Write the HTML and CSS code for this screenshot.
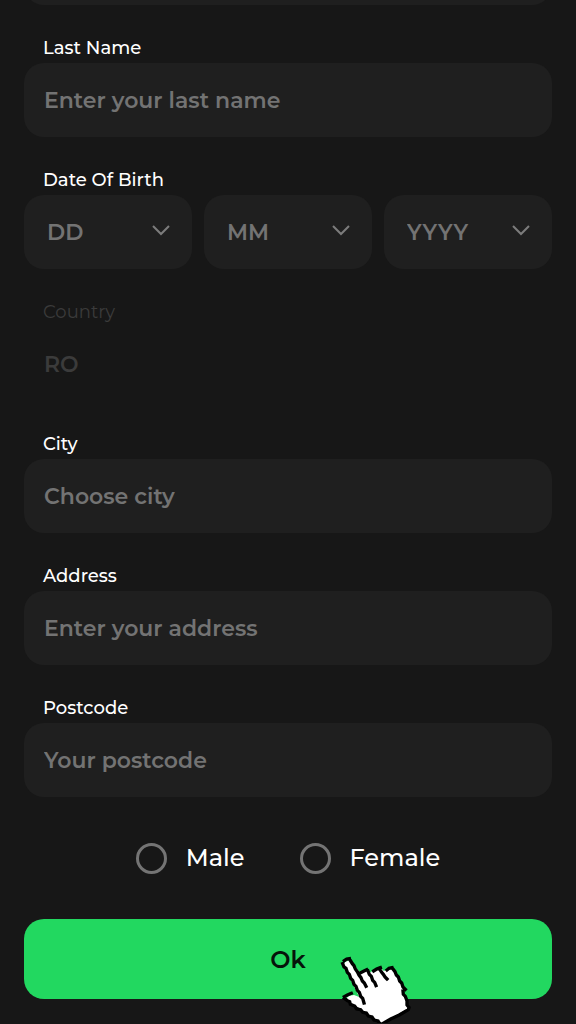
FILE: index.html
```html
<!DOCTYPE html>
<html lang="en">
<head>
<meta charset="utf-8">
<meta name="viewport" content="width=device-width, initial-scale=1">
<title>Your details</title>
<link rel="stylesheet" href="styles.css">
</head>
<body>
<form class="form">
  <div class="field">
    <input class="box" type="text" aria-label="First Name">
  </div>
  <div class="field">
    <label class="label" for="last">Last Name</label>
    <input class="box" id="last" type="text" placeholder="Enter your last name">
  </div>
  <div class="field">
    <label class="label" for="day">Date Of Birth</label>
    <div class="dates">
      <div class="pick">
        <select class="box select" id="day"><option>DD</option></select>
        <svg class="chevron" viewBox="0 0 18 12"><path d="M1 2l8 8 8-8"/></svg>
      </div>
      <div class="pick">
        <select class="box select" aria-label="Month"><option>MM</option></select>
        <svg class="chevron" viewBox="0 0 18 12"><path d="M1 2l8 8 8-8"/></svg>
      </div>
      <div class="pick">
        <select class="box select" aria-label="Year"><option>YYYY</option></select>
        <svg class="chevron" viewBox="0 0 18 12"><path d="M1 2l8 8 8-8"/></svg>
      </div>
    </div>
  </div>
  <div class="field locked">
    <label class="label" for="country">Country</label>
    <input class="box" id="country" type="text" value="RO" disabled>
  </div>
  <div class="field">
    <label class="label" for="city">City</label>
    <input class="box" id="city" type="text" placeholder="Choose city">
  </div>
  <div class="field">
    <label class="label" for="address">Address</label>
    <input class="box" id="address" type="text" placeholder="Enter your address">
  </div>
  <div class="field">
    <label class="label" for="postcode">Postcode</label>
    <input class="box" id="postcode" type="text" placeholder="Your postcode">
  </div>
  <div class="genders">
    <label class="gender"><input class="radio" type="radio" name="gender">Male</label>
    <label class="gender"><input class="radio" type="radio" name="gender">Female</label>
  </div>
  <div class="action">
    <button class="ok" type="button">Ok</button>
    <svg class="hand" viewBox="0 0 330 252" aria-hidden="true">
      <path class="hand-fill" d="M70 78L76 68 90 64 122 102 142 92 150 100 163 94 182 88 192 96 202 90 216 88 256 152 250 160 262 184 266 208 186 252 174 244 150 232 126 212 96 194 76 180 88 170 102 168 118 174z"/>
      <path class="hand-line" d="M68 74L72 84 78 88 82 100 88 106 92 118 98 124 102 136 108 142 112 154 118 160 122 172 128 178 132 192M73 65L80 60 88 59M92 66L97 74 102 80 106 90 112 98 117 108 123 116 127 126 133 132 138 142M122 101L132 96 140 92M144 96L148 106 154 112 158 124 164 130 168 140M161 96L170 90 181 86M180 92L185 100 190 106 195 114 201 120M201 93L207 88 216 86M219 90L225 98 229 108 235 114 239 126 245 132 249 144 256 151M249 156L250 166 256 172 260 183M261 188L261 198 267 205 265 212 238 228 212 240 184 256M73 173L82 168 94 163M73 178L82 185 89 188 91 196 104 201 110 210 122 212 128 220 139 222 145 231 156 234 162 243 174 246 180 256"/>
    </svg>
  </div>
</form>
</body>
</html>
```
FILE: styles.css
```css
* { box-sizing: border-box; }
body {
  margin: 0;
  background: #171717;
  color: #fff;
  font-family: Montserrat, Inter, "Liberation Sans", sans-serif;
  overflow: hidden;
}
.form {
  display: flex;
  flex-direction: column;
  gap: 28px;
  padding: 0 24px 24px;
  margin-top: -69px;
}
.field { display: flex; flex-direction: column; }
.label { padding-left: 19px; font-size: 18px; font-weight: 500; line-height: 30px; }
.box {
  width: 100%;
  height: 74px;
  padding: 0 20px;
  border: 0;
  border-radius: 20px;
  background: #1f1f1f;
  color: #737373;
  font: inherit;
  font-size: 22px;
  font-weight: 600;
}
.box::placeholder { color: #737373; opacity: 1; }
.dates { display: grid; grid-template-columns: repeat(3, 1fr); gap: 12px; }
.pick { position: relative; }
.select { appearance: none; padding: 0 23px; }
.chevron {
  position: absolute;
  right: 22px;
  top: 29px;
  width: 18px;
  height: 12px;
  fill: none;
  stroke: #7c7c7c;
  stroke-width: 2;
  pointer-events: none;
}
.locked .label, .locked .box { color: #3b3b3b; background: none; }
.locked .label { font-weight: 400; }
.genders {
  display: flex;
  justify-content: center;
  gap: 55px;
  padding: 16px 0;
}
.gender { display: flex; align-items: center; gap: 19px; font-size: 24px; font-weight: 500; line-height: 34px; }
.radio {
  appearance: none;
  width: 31px;
  height: 31px;
  margin: 0;
  border: 3px solid #747474;
  border-radius: 50%;
}
.action { position: relative; }
.ok {
  display: block;
  width: 100%;
  height: 80px;
  border: 0;
  border-radius: 20px;
  background: #22d860;
  color: #06140a;
  font: inherit;
  font-size: 24px;
  font-weight: 600;
}
.hand {
  position: absolute;
  left: 296px;
  top: 20px;
  width: 110px;
  height: 84px;
  pointer-events: none;
}
.hand-fill { fill: #fff; }
.hand-line {
  fill: none;
  stroke: #000;
  stroke-width: 10;
  stroke-linecap: square;
}
```
